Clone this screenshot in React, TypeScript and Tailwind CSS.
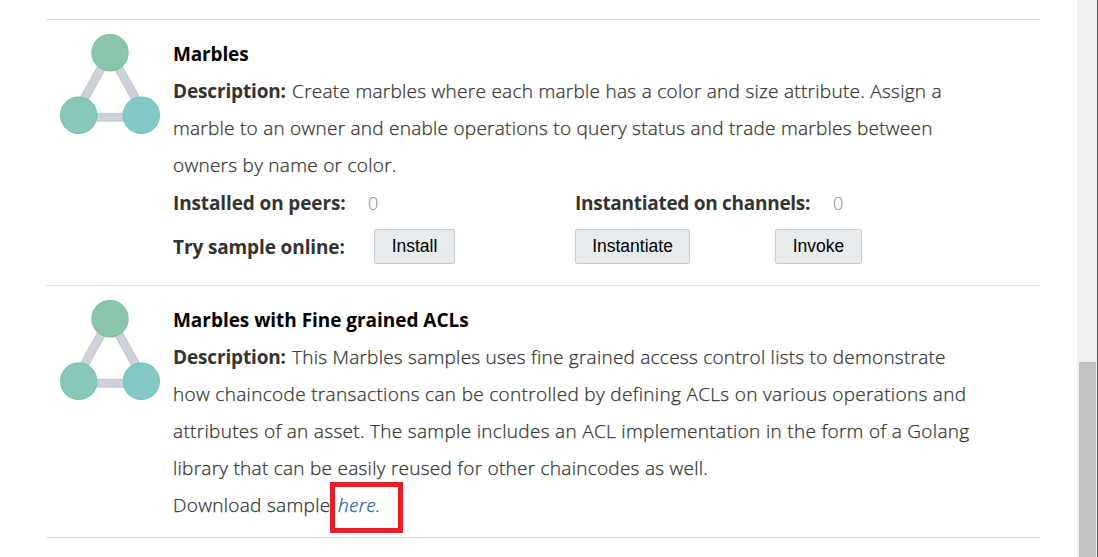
import type { ReactNode } from 'react';

function SampleIcon() {
  return (
    <svg className="mt-[14px] block h-[100px] w-[100px] shrink-0" viewBox="0 0 100 100">
      <g stroke="#c5cad3" strokeWidth="9">
        <path d="M50 18.5 L18.7 74.5" />
        <path d="M50 18.5 L81.3 74.5" />
        <path d="M18.7 83.3 H81.3" />
      </g>
      <g stroke="#cdd2da" strokeWidth="6.5">
        <path d="M50 18.5 L18.7 74.5" />
        <path d="M50 18.5 L81.3 74.5" />
        <path d="M18.7 83.3 H81.3" />
      </g>
      <circle cx="50" cy="18.7" r="18.1" fill="#89c6ac" stroke="#7dc1a3" strokeWidth="1.2" />
      <circle cx="18.7" cy="81.2" r="18.1" fill="#88c8bb" stroke="#7cc2b2" strokeWidth="1.2" />
      <circle cx="81.3" cy="81.2" r="18.1" fill="#85c9c6" stroke="#78c3c0" strokeWidth="1.2" />
    </svg>
  );
}

function Sample({ children, className = '' }: { children: ReactNode; className?: string }) {
  return (
    <section className={`flex w-[994px] border-t border-[#dfdfdf] pl-[14px] ${className}`}>
      <SampleIcon />
      <div className="ml-[13px] flex-1 whitespace-nowrap pt-4">{children}</div>
    </section>
  );
}

function Line({ children, className = '' }: { children: ReactNode; className?: string }) {
  return (
    <div className="h-[37px]">
      <span className={className}>{children}</span>
    </div>
  );
}

function Label({ children, className = '' }: { children: ReactNode; className?: string }) {
  return <b className={`font-bold [-webkit-text-stroke:0px] ${className}`}>{children}</b>;
}

function ActionButton({ children, className }: { children: ReactNode; className: string }) {
  return (
    <button
      className={`h-[35px] rounded-[2px] border border-[#c4ced7] bg-[#e7ebee] pt-px font-['Liberation_Sans',sans-serif] text-[17.5px] font-normal leading-none tracking-normal text-black [-webkit-text-stroke:0px] ${className}`}
    >
      {children}
    </button>
  );
}

export default function App() {
  return (
    <div className="flex h-[557px] w-[1098px] overflow-hidden bg-white font-['Open_Sans',sans-serif] text-[19px] font-light leading-[37px] text-[#333] [-webkit-text-stroke:0.25px]">
      <main className="w-[1077px] pl-[46px] pt-[19px]">
        <Sample className="h-[266px]">
          <Line>
            <Label className="tracking-[-0.15px] text-black">Marbles</Label>
          </Line>
          <Line className="tracking-[0.27px]">
            <Label className="mr-px tracking-[-0.15px]">Description:</Label> Create marbles where each marble has a color and size attribute. Assign a
          </Line>
          <Line className="tracking-[0.25px]">marble to an owner and enable operations to query status and trade marbles between</Line>
          <Line className="tracking-[0.27px]">owners by name or color.</Line>
          <div className="flex h-[37px] pt-px">
            <Label className="w-[195px] tracking-[-0.12px]">Installed on peers:</Label>
            <div className="w-[207px] text-[18px] text-[#888] [-webkit-text-stroke:0px]">0</div>
            <Label className="w-[258px] tracking-[-0.28px]">Instantiated on channels:</Label>
            <div className="text-[18px] text-[#888] [-webkit-text-stroke:0px]">0</div>
          </div>
          <div className="mt-2 flex">
            <Label className="w-[201px] tracking-[-0.12px]">Try sample online:</Label>
            <ActionButton className="w-[81px]">Install</ActionButton>
            <ActionButton className="ml-[120px] w-[115px]">Instantiate</ActionButton>
            <ActionButton className="ml-[85px] w-[87px]">Invoke</ActionButton>
          </div>
        </Sample>
        <Sample className="h-[253px] border-b">
          <Line>
            <Label className="tracking-[-0.04px] text-black">Marbles with Fine grained ACLs</Label>
          </Line>
          <Line className="tracking-[0.24px]">
            <Label className="mr-px tracking-[-0.15px]">Description:</Label> This Marbles samples uses fine grained access control lists to demonstrate
          </Line>
          <Line className="tracking-[0.32px]">how chaincode transactions can be controlled by defining ACLs on various operations and</Line>
          <Line className="tracking-[0.31px]">attributes of an asset. The sample includes an ACL implementation in the form of a Golang</Line>
          <Line className="tracking-[0.26px]">library that can be easily reused for other chaincodes as well.</Line>
          <div className="relative flex h-[37px] tracking-[0.3px]">
            <div className="w-[165px]">Download sample</div>
            <a className="italic text-[#1464a5]">here.</a>
            <div className="absolute -top-[5px] left-[157px] h-[51px] w-[73px] border-[5px] border-[#ed1c24]" />
          </div>
        </Sample>
      </main>
      <aside className="flex w-[21px] items-end border-r border-[#606060] bg-[#f0f0f0] pl-[2px]">
        <div className="h-[195px] w-[17px] bg-[#c1c1c1]" />
      </aside>
    </div>
  );
}
